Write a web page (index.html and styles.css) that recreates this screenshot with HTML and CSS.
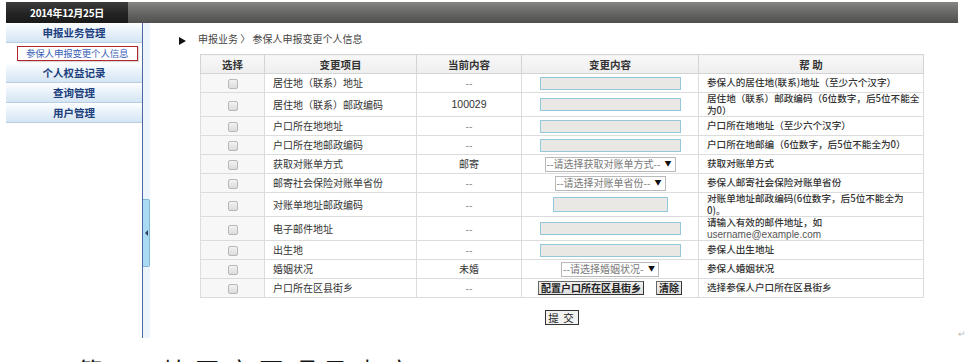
FILE: index.html
```html
<!DOCTYPE html>
<html lang="zh-CN">
<head>
<meta charset="utf-8">
<title>参保人申报变更个人信息</title>
<link rel="stylesheet" href="styles.css">
</head>
<body>
<div class="doc-line">
  <div class="shot">
    <div class="topbar">
      <div class="date-tab">2014年12月25日</div>
    </div>
    <div class="main">
      <aside class="sidebar">
        <div class="menu-item">申报业务管理</div>
        <div class="sub-item"><span class="sub-box">参保人申报变更个人信息</span></div>
        <div class="menu-item">个人权益记录</div>
        <div class="menu-item">查询管理</div>
        <div class="menu-item">用户管理</div>
      </aside>
      <div class="splitter">
        <div class="handle"><span class="handle-arrow"></span></div>
      </div>
      <section class="content">
        <div class="crumb"><span class="crumb-arrow"></span><span>申报业务 〉 参保人申报变更个人信息</span></div>
        <table class="grid">
          <colgroup>
            <col class="c1"><col class="c2"><col class="c3"><col class="c4"><col class="c5">
          </colgroup>
          <thead>
            <tr><th>选择</th><th>变更项目</th><th>当前内容</th><th>变更内容</th><th>帮 助</th></tr>
          </thead>
          <tbody>
            <tr>
              <td class="chk"><span class="box"></span></td>
              <td class="item">居住地（联系）地址</td>
              <td class="cur">--</td>
              <td class="edit"><input class="field" type="text"></td>
              <td class="help">参保人的居住地(联系)地址（至少六个汉字）</td>
            </tr>
            <tr class="tall">
              <td class="chk"><span class="box"></span></td>
              <td class="item">居住地（联系）邮政编码</td>
              <td class="cur num">100029</td>
              <td class="edit"><input class="field" type="text"></td>
              <td class="help">居住地（联系）邮政编码（6位数字，后5位不能全为0）</td>
            </tr>
            <tr>
              <td class="chk"><span class="box"></span></td>
              <td class="item">户口所在地地址</td>
              <td class="cur">--</td>
              <td class="edit"><input class="field" type="text"></td>
              <td class="help">户口所在地地址（至少六个汉字）</td>
            </tr>
            <tr>
              <td class="chk"><span class="box"></span></td>
              <td class="item">户口所在地邮政编码</td>
              <td class="cur">--</td>
              <td class="edit"><input class="field" type="text"></td>
              <td class="help">户口所在地邮编（6位数字，后5位不能全为0）</td>
            </tr>
            <tr>
              <td class="chk"><span class="box"></span></td>
              <td class="item">获取对账单方式</td>
              <td class="cur dark">邮寄</td>
              <td class="edit"><span class="select s1">--请选择获取对账单方式--<span class="caret">▼</span></span></td>
              <td class="help">获取对账单方式</td>
            </tr>
            <tr>
              <td class="chk"><span class="box"></span></td>
              <td class="item">邮寄社会保险对账单省份</td>
              <td class="cur">--</td>
              <td class="edit"><span class="select s2">--请选择对账单省份--<span class="caret">▼</span></span></td>
              <td class="help">参保人邮寄社会保险对账单省份</td>
            </tr>
            <tr class="tall">
              <td class="chk"><span class="box"></span></td>
              <td class="item">对账单地址邮政编码</td>
              <td class="cur">--</td>
              <td class="edit"><input class="field short" type="text"></td>
              <td class="help">对账单地址邮政编码(6位数字，后5位不能全为0)。</td>
            </tr>
            <tr class="tall">
              <td class="chk"><span class="box"></span></td>
              <td class="item">电子邮件地址</td>
              <td class="cur">--</td>
              <td class="edit"><input class="field" type="text"></td>
              <td class="help">请输入有效的邮件地址，如<br><span class="latin">username@example.com</span></td>
            </tr>
            <tr>
              <td class="chk"><span class="box"></span></td>
              <td class="item">出生地</td>
              <td class="cur">--</td>
              <td class="edit"><input class="field" type="text"></td>
              <td class="help">参保人出生地址</td>
            </tr>
            <tr>
              <td class="chk"><span class="box"></span></td>
              <td class="item">婚姻状况</td>
              <td class="cur dark">未婚</td>
              <td class="edit"><span class="select s3">--请选择婚姻状况-<span class="caret">▼</span></span></td>
              <td class="help">参保人婚姻状况</td>
            </tr>
            <tr>
              <td class="chk"><span class="box"></span></td>
              <td class="item">户口所在区县街乡</td>
              <td class="cur">--</td>
              <td class="edit"><span class="btns"><button class="btn" type="button">配置户口所在区县街乡</button><button class="btn" type="button">清除</button></span></td>
              <td class="help">选择参保人户口所在区县街乡</td>
            </tr>
          </tbody>
        </table>
        <div class="submit-row"><button class="btn submit" type="button">提 交</button></div>
      </section>
    </div>
  </div>
  <span class="para-mark">↵</span>
</div>
<p class="doc-text">第3、填写变更项目内容</p>
</body>
</html>
```

FILE: styles.css
```css
html, body {
  margin: 0;
  padding: 0;
  background: #ffffff;
}
body {
  font-family: "Noto Sans CJK SC", "Liberation Sans", sans-serif;
  color: #333;
  overflow: hidden;
}

.doc-line {
  display: flex;
  align-items: flex-end;
  padding-left: 6px;
}
.shot {
  width: 952px;
  padding-top: 2px;
}
.para-mark {
  font-size: 9px;
  line-height: 9px;
  color: #bbb;
  margin-left: 0;
  margin-bottom: 0;
}

/* top bar */
.topbar {
  height: 21px;
  background: linear-gradient(#858583, #6a6a68 45%, #4f4f4d);
  display: flex;
}
.date-tab {
  width: 122px;
  background: linear-gradient(#3c3c3c, #222 60%, #1a1a1a);
  color: #fff;
  font-weight: bold;
  font-size: 10px;
  line-height: 21px;
  text-align: center;
  letter-spacing: -0.3px;
}

/* main area */
.main {
  display: flex;
  height: 315px;
}
.sidebar {
  width: 137px;
  border-right: 1px solid #4a6aa5;
  padding-top: 1px;
  box-sizing: border-box;
}
.menu-item {
  height: 18px;
  line-height: 18px;
  margin-bottom: 1px;
  text-align: center;
  font-size: 10.5px;
  font-weight: bold;
  color: #1d3f7e;
  background: linear-gradient(#fbfdff, #e6f0f9 50%, #d5e5f3);
  border-bottom: 1px solid #b9cde2;
}
.sub-item {
  height: 19px;
  display: flex;
  align-items: center;
  padding-left: 11px;
  margin-bottom: 1px;
}
.sub-box {
  width: 111px;
  height: 13px;
  line-height: 13px;
  border: 1px solid #b0262c;
  box-shadow: 1px 1px 1px rgba(0,0,0,0.15);
  font-size: 9.5px;
  color: #3a62b5;
  padding-left: 8px;
  box-sizing: content-box;
  white-space: nowrap;
  overflow: hidden;
  letter-spacing: -0.2px;
}

.splitter {
  width: 7px;
  background: #eef4fb;
}
.handle {
  margin-top: 176px;
  height: 66px;
  width: 6px;
  background: #a9daf3;
  border: 1px solid #7fb6d4;
  border-left: none;
  border-radius: 0 2px 2px 0;
  display: flex;
  align-items: center;
  justify-content: center;
}
.handle-arrow {
  width: 0;
  height: 0;
  border-top: 3px solid transparent;
  border-bottom: 3px solid transparent;
  border-right: 3px solid #2f3f5f;
}

.content {
  flex: 1;
  padding-top: 8px;
}
.crumb {
  display: flex;
  align-items: center;
  height: 14px;
  padding-left: 29px;
  font-size: 10px;
  color: #444;
}
.crumb-arrow {
  width: 0;
  height: 0;
  border-top: 4px solid transparent;
  border-bottom: 4px solid transparent;
  border-left: 7px solid #111;
  margin-right: 12px;
  margin-top: 5px;
}

/* table */
.grid {
  margin-top: 9px;
  margin-left: 50px;
  width: 723px;
  border-collapse: collapse;
  table-layout: fixed;
  font-size: 10px;
  border: 1px solid #cfcfcf;
}
.c1 { width: 64px; }
.c2 { width: 152px; }
.c3 { width: 105px; }
.c4 { width: 177px; }
.c5 { width: 225px; }

.grid th {
  height: 18px;
  padding: 0;
  background: linear-gradient(#f8f8f8, #eeeeee);
  border: 1px solid #d4d4d4;
  font-weight: bold;
  font-size: 10.5px;
  color: #333;
  text-align: center;
}
.grid td {
  height: 18px;
  padding: 0;
  border: 1px solid #dcdcdc;
  line-height: 11.5px;
  vertical-align: middle;
}
.grid tr.tall td {
  height: 22px;
}
.chk {
  text-align: center;
  background: #f7f7f7;
}
.box {
  display: inline-block;
  width: 8px;
  height: 8px;
  border: 1px solid #b8b8b8;
  border-radius: 2px;
  background: linear-gradient(#f2f2f2, #dcdcdc);
  vertical-align: middle;
}
.item {
  padding-left: 8px !important;
  color: #333;
  white-space: nowrap;
}
.cur {
  text-align: center;
  color: #777;
}
.cur.num, .cur.dark {
  color: #333;
}
.cur.num {
  font-family: "Liberation Sans", sans-serif;
  font-size: 10.5px;
}
.edit {
  text-align: center;
  font-size: 0;
}
.field {
  display: inline-block;
  width: 141px;
  height: 13px;
  box-sizing: border-box;
  border: 1px solid #94c8da;
  background: #e9e8e4;
  padding: 0;
  margin: 0;
  vertical-align: middle;
}
.field.short {
  width: 115px;
  height: 15px;
}
.select {
  display: inline-flex;
  align-items: center;
  justify-content: space-between;
  height: 15px;
  box-sizing: border-box;
  border: 1px solid #b9b9b9;
  background: #fff;
  color: #777;
  font-size: 10px;
  padding: 0 3px 0 1px;
  vertical-align: middle;
  white-space: nowrap;
}
.s1 { width: 131px; }
.s2 { width: 111px; }
.s3 { width: 98px; }
.caret {
  color: #111;
  font-size: 7px;
  margin-left: 4px;
}
.btns {
  display: inline-flex;
  gap: 12px;
  vertical-align: middle;
}
.btn {
  height: 14px;
  padding: 0 2px;
  margin: 0;
  font-family: "Noto Sans CJK SC", sans-serif;
  font-size: 10px;
  line-height: 12px;
  font-weight: bold;
  color: #222;
  background: linear-gradient(#f0f0f0, #dedede);
  border: 1px solid #666;
  border-right-color: #333;
  border-bottom-color: #333;
  border-radius: 0;
}
.help {
  padding-left: 8px !important;
  padding-right: 2px !important;
  color: #333;
  font-weight: 500;
  font-size: 9.6px;
}
.latin {
  font-family: "Liberation Sans", sans-serif;
  color: #555;
  font-weight: normal;
  font-size: 10px;
}
.submit-row {
  width: 723px;
  margin-left: 50px;
  margin-top: 12px;
  display: flex;
  justify-content: center;
}
.btn.submit {
  width: 34px;
  height: 15px;
  font-size: 10.5px;
  font-weight: normal;
  letter-spacing: 1px;
  padding: 0;
  border: 1px solid #333;
  background: #f2f2f2;
}

.doc-text {
  margin: 20px 0 0 78px;
  font-size: 24px;
  line-height: 24px;
  color: #111;
  white-space: nowrap;
  letter-spacing: 8px;
}
```
